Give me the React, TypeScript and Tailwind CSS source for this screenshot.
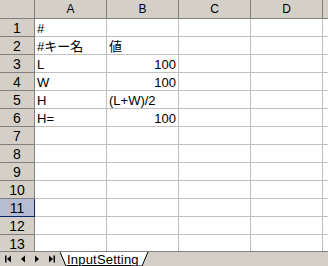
const cols = ["A", "B", "C", "D"];

type Cell = { text: string; right?: boolean };

const data: Record<number, Cell[]> = {
  1: [{ text: "#" }],
  2: [{ text: "#キー名" }, { text: "値" }],
  3: [{ text: "L" }, { text: "100", right: true }],
  4: [{ text: "W" }, { text: "100", right: true }],
  5: [{ text: "H" }, { text: "(L+W)/2" }],
  6: [{ text: "H=" }, { text: "100", right: true }],
};

const rows = Array.from({ length: 13 }, (_, i) => i + 1);

function NavIcon({ kind }: { kind: "first" | "prev" | "next" | "last" }) {
  return (
    <svg width="8" height="8" viewBox="0 0 8 8" className="block">
      {kind === "first" && (
        <>
          <rect x="1" y="0.5" width="1.5" height="7" fill="#000" />
          <polygon points="3,4 7,0.5 7,7.5" fill="#000" />
        </>
      )}
      {kind === "prev" && <polygon points="2,4 6,0.5 6,7.5" fill="#000" />}
      {kind === "next" && <polygon points="6,4 2,0.5 2,7.5" fill="#000" />}
      {kind === "last" && (
        <>
          <polygon points="5,4 1,0.5 1,7.5" fill="#000" />
          <rect x="5.5" y="0.5" width="1.5" height="7" fill="#000" />
        </>
      )}
    </svg>
  );
}

export default function App() {
  return (
    <div
      className="w-[328px] h-[266px] overflow-hidden bg-white flex flex-col text-[13px] text-black leading-none"
      style={{ fontFamily: '"Liberation Sans", "Noto Sans CJK JP", sans-serif' }}
    >
      <div className="flex-1 overflow-hidden">
        {/* column header */}
        <div className="flex h-[19px] bg-[#d4d0c8] border-b border-[#808080] text-[12px]">
          <div className="w-[35px] shrink-0 border-r border-[#808080]" />
          {cols.map((c) => (
            <div
              key={c}
              className="w-[72px] shrink-0 border-r border-[#808080] flex items-center justify-center"
            >
              {c}
            </div>
          ))}
          <div className="flex-1" />
        </div>

        {rows.map((r) => {
          const cells = data[r] ?? [];
          const active = r === 11;
          return (
            <div key={r} className="flex h-[18px]">
              <div
                className={
                  active
                    ? "w-[35px] shrink-0 bg-[#b6bdd2] border-r border-b border-[#0a246a] flex items-center justify-center pt-[1px] text-[14px]"
                    : "w-[35px] shrink-0 bg-[#d4d0c8] border-r border-b border-[#808080] flex items-center justify-center pt-[1px] text-[14px]"
                }
              >
                {r}
              </div>
              {cols.map((c, i) => {
                const cell = cells[i];
                return (
                  <div
                    key={c}
                    className={
                      cell?.right
                        ? "w-[72px] shrink-0 border-r border-b border-[#c0c0c0] flex items-center justify-end pr-[2px] pt-[2px] whitespace-nowrap"
                        : "w-[72px] shrink-0 border-r border-b border-[#c0c0c0] flex items-center pl-[2px] pt-[2px] whitespace-nowrap"
                    }
                  >
                    {cell?.text}
                  </div>
                );
              })}
              <div className="flex-1 border-b border-[#c0c0c0]" />
            </div>
          );
        })}
      </div>

      {/* sheet tabs */}
      <div className="h-[15px] shrink-0 bg-[#d4d0c8] border-t border-[#808080] flex items-stretch">
        <div className="w-[60px] shrink-0 flex items-center justify-around px-[1px]">
          <NavIcon kind="first" />
          <NavIcon kind="prev" />
          <NavIcon kind="next" />
          <NavIcon kind="last" />
        </div>
        <div className="relative w-[90px] shrink-0 flex items-center pl-[7px]">
          <svg
            className="absolute inset-0"
            width="90"
            height="14"
            viewBox="0 0 90 14"
          >
            <polygon points="0,0 88,0 82,14 6,14" fill="#fff" />
            <polyline points="0,0 6,14 82,14 88,0" fill="none" stroke="#000" strokeWidth="1" />
          </svg>
          <span className="relative underline text-[13px] tracking-[0.2px]">InputSetting</span>
        </div>
        <div className="flex-1" />
      </div>
    </div>
  );
}
